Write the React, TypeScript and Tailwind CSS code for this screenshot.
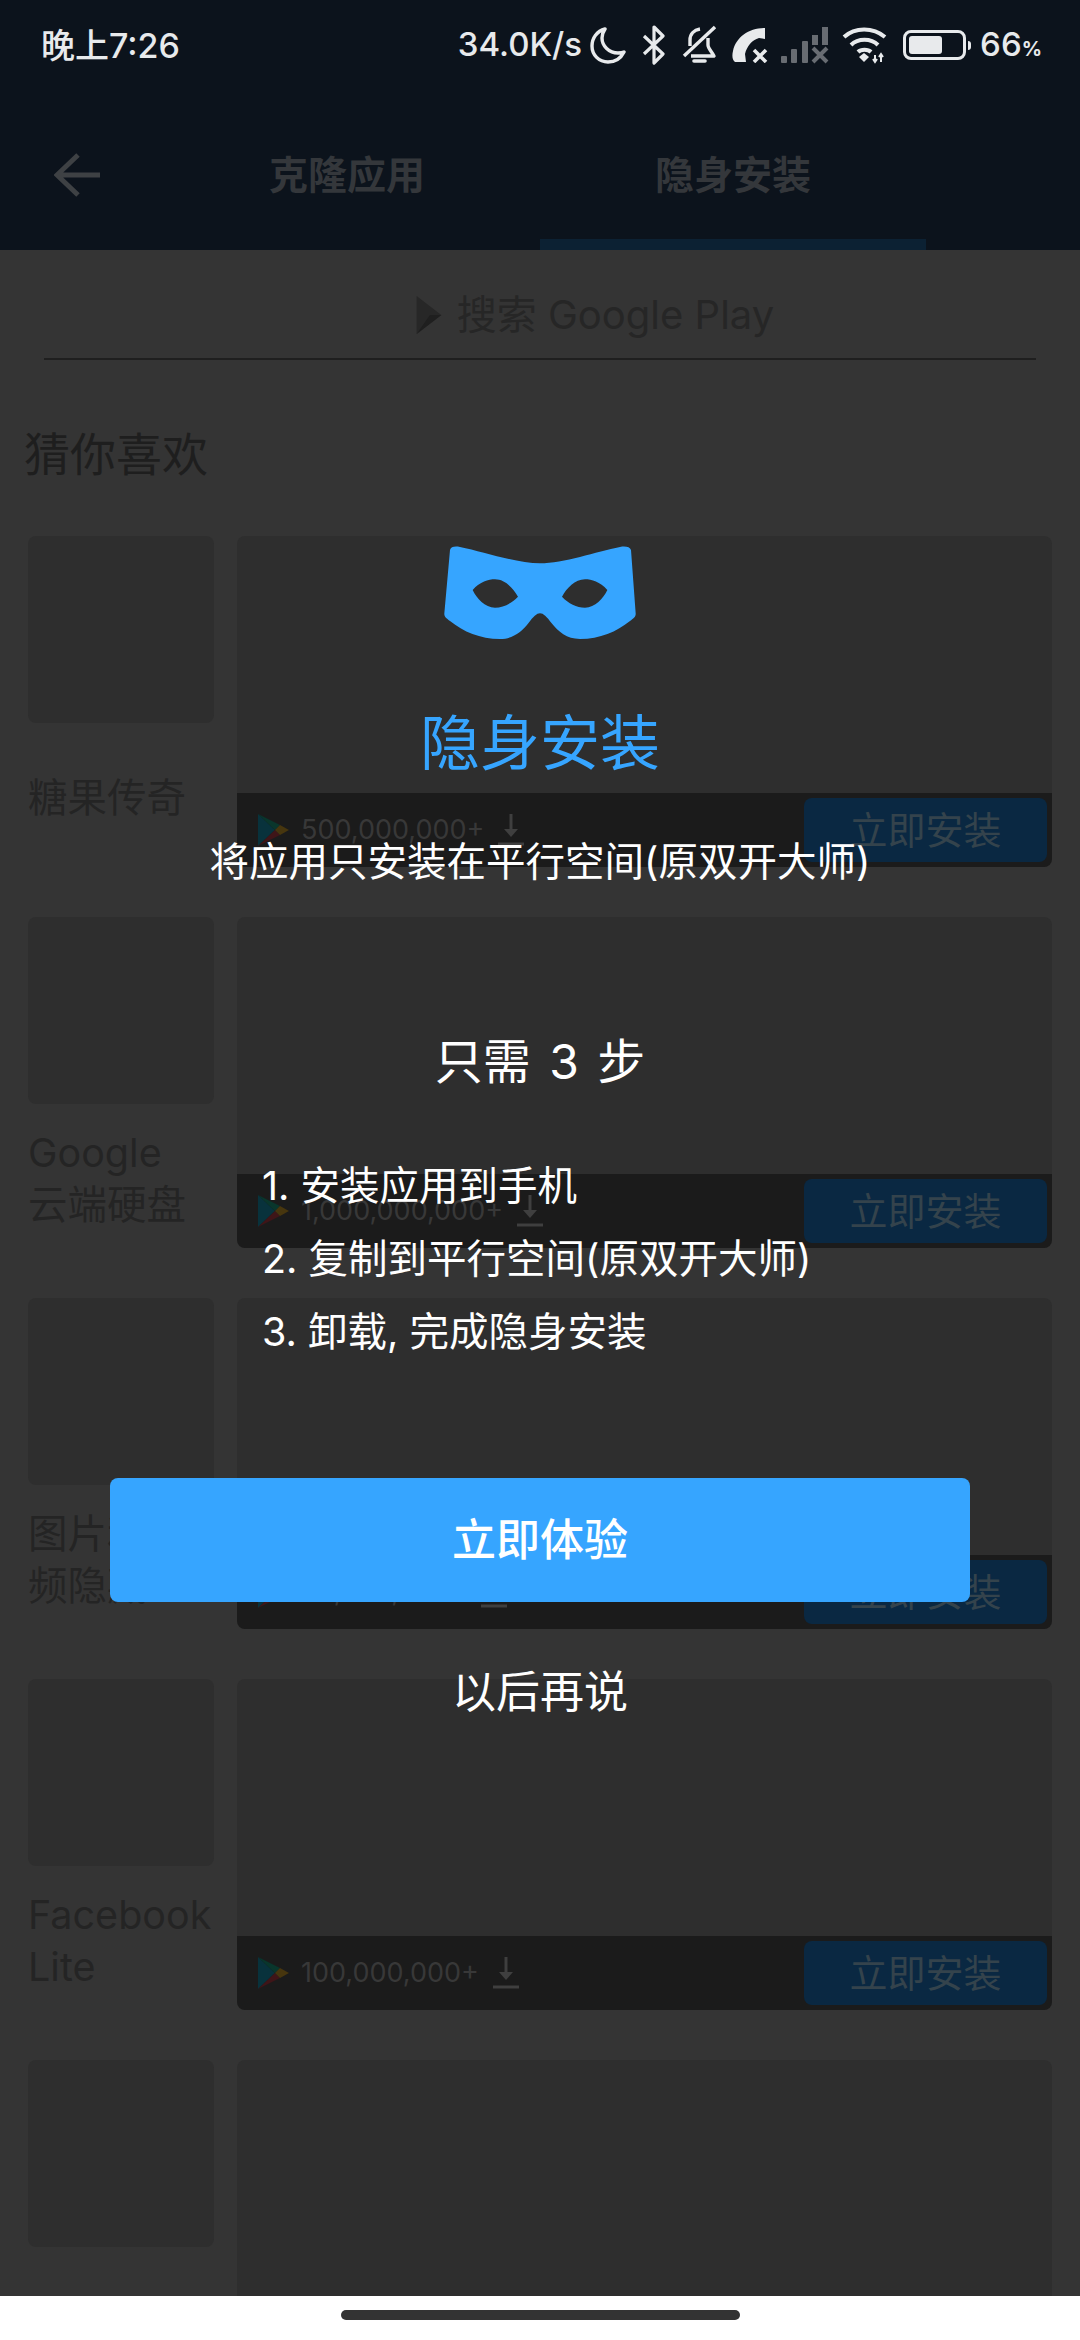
const fontStack = 'Inter, "Noto Sans CJK SC", sans-serif';

const apps = [
  { name: "糖果传奇", count: "500,000,000+" },
  { name: "Google\n云端硬盘", count: "1,000,000,000+" },
  { name: "图片和视频隐藏", count: "50,000,000+" },
  { name: "Facebook\nLite", count: "100,000,000+" },
  { name: "", count: "" },
];

function StatusIcons() {
  return (
    <div className="flex items-center text-[#e8eaec]">
      <svg width="36" height="38" viewBox="0 0 36 38" fill="none" stroke="currentColor" strokeWidth="3.4" className="ml-[8px]">
        <path d="M15 3C7 5 2 12 2 20c0 9 7 16 16 16 7 0 13-4 16-10-2 1-4 1-6 1-9 0-16-7-16-15 0-3 1-6 3-9z" strokeLinejoin="round" />
      </svg>
      <svg width="24" height="40" viewBox="0 0 24 40" fill="none" stroke="currentColor" strokeWidth="3.2" className="ml-[16px]">
        <path d="M2 11l19 18-9 9V2l9 9L2 29" strokeLinejoin="round" />
      </svg>
      <svg width="36" height="40" viewBox="0 0 36 40" fill="none" stroke="currentColor" strokeWidth="3.4" className="ml-[16px]">
        <path d="M2 31L33 2" />
        <path d="M8 21v-6c0-6 4-10 10-11M26 13v7c0 3 3 6 6 11H9" strokeLinejoin="round" />
        <path d="M12 36h11" strokeWidth="3.6" strokeLinecap="round" />
      </svg>
      <svg width="36" height="36" viewBox="0 0 36 36" className="ml-[14px]">
        <path d="M33 1v11l-6-1c-7 2-12 8-14 16l1 8H3C0 33 0 28 1 24 4 10 17 1 33 1z" fill="currentColor" />
        <path d="M22 23l12 12M34 23L22 35" stroke="currentColor" strokeWidth="3.6" fill="none" />
      </svg>
      <svg width="48" height="38" viewBox="0 0 48 38" fill="#686c72" className="ml-[13px]">
        <rect x="0" y="30" width="6" height="7" rx="1" />
        <rect x="10" y="23" width="6" height="14" rx="1" />
        <rect x="21" y="15" width="6" height="22" rx="1" />
        <rect x="31" y="9" width="6" height="10" />
        <rect x="41" y="1" width="6" height="18" />
        <path d="M32 22l14 14M46 22L32 36" stroke="#686c72" strokeWidth="4" fill="none" />
      </svg>
      <svg width="46" height="38" viewBox="0 0 46 38" fill="none" stroke="currentColor" strokeWidth="4" className="ml-[13px]">
        <path d="M2 11c11-10 29-10 41 0M9 19c7-7 20-7 27 0M16 26c3-3 10-3 13 0" />
        <path d="M17 31l5-4 5 4-5 5z" fill="currentColor" stroke="none" />
        <path d="M33 36v-7M31 33l2 3 2-3M39 36v-8M37 31l2-3 2 3" strokeWidth="2" />
      </svg>
      <div className="ml-[15px] flex items-center">
        <div className="flex h-[30px] w-[63px] items-stretch rounded-[8px] border-[3px] border-[#e8eaec] p-[3px]">
          <div className="w-[33px] rounded-[3px] bg-[#e8eaec]" />
        </div>
        <div className="ml-[2px] h-[9px] w-[3px] rounded-r-sm bg-[#e8eaec]" />
      </div>
    </div>
  );
}

function PlayLogo() {
  return (
    <svg width="31" height="32" viewBox="0 0 31 32">
      <path d="M0 0l17 16L0 32z" fill="#08323c" />
      <path d="M0 0l22 11-5 5z" fill="#09362c" />
      <path d="M0 32l17-16 5 5z" fill="#3f1518" />
      <path d="M22 11l9 5-9 5-5-5z" fill="#47360e" />
    </svg>
  );
}

function AppRow({ name, count }: { name: string; count: string }) {
  return (
    <div className="flex shrink-0 gap-[23px]">
      <div className="w-[186px] shrink-0">
        <div className="h-[187px] rounded-lg bg-[#2e2e2e]" />
        <div className="flex h-[144px] items-center whitespace-pre-line pt-[6px] text-[39.5px] leading-[52px] text-[#242424]">{name}</div>
      </div>
      <div className="flex h-[331px] w-[815px] flex-col overflow-hidden rounded-lg bg-[#2e2e2e]">
        <div className="flex-1" />
        {count && (
          <div className="flex h-[74px] items-center bg-[#1b1b1b] pr-[5px] pl-[21px]">
            <PlayLogo />
            <span className="ml-[12px] text-[27px] text-[#383838]">{count}</span>
            <svg width="26" height="32" viewBox="0 0 26 32" fill="none" stroke="#3f3f3f" className="ml-[14px]">
              <path d="M13 0v18" strokeWidth="3" />
              <path d="M6 15h14l-7 8z" fill="#3f3f3f" stroke="none" />
              <path d="M0 30h26" strokeWidth="3" />
            </svg>
            <div className="ml-auto flex h-[64px] w-[243px] items-center justify-center rounded-lg bg-[#0a2842] text-[38px] text-[#34434c]">
              立即安装
            </div>
          </div>
        )}
      </div>
    </div>
  );
}

export default function App() {
  return (
    <div className="relative flex h-[2340px] w-[1080px] flex-col overflow-hidden bg-white" style={{ fontFamily: fontStack }}>
      {/* Toolbar */}
      <header className="h-[250px] shrink-0 bg-[#0c131c]">
        <div className="flex h-[90px] items-center justify-between pr-[38px] pl-[41px] font-medium text-[#e8eaec]">
          <span className="text-[34px]">晚上7:26</span>
          <div className="flex items-center">
            <span className="text-[33px]">34.0K/s</span>
            <StatusIcons />
            <span className="ml-[9px] text-[33px]">
              66<span className="text-[20px] font-bold">%</span>
            </span>
          </div>
        </div>
        <div className="flex h-[160px]">
          <div className="flex w-[154px] items-center pt-[10px] pl-[54px]">
            <svg width="46" height="44" viewBox="0 0 46 44" fill="none" stroke="#3e4144" strokeWidth="5">
              <path d="M24 2L3 22l21 20M3 22h43" />
            </svg>
          </div>
          <div className="flex w-[386px] items-center justify-center pt-[10px] text-[39px] font-bold text-[#34373b]">克隆应用</div>
          <div className="flex w-[386px] flex-col">
            <div className="flex flex-1 items-center justify-center pt-[21px] text-[39px] font-bold text-[#34373b]">隐身安装</div>
            <div className="h-[11px] bg-[#0c2133]" />
          </div>
        </div>
      </header>

      {/* Page under the dialog */}
      <main className="min-h-0 flex-1 overflow-hidden bg-[#343434]">
        <div className="mx-[44px] flex h-[110px] items-center justify-center border-b-[2px] border-[#1f1f1f] pt-[22px] pl-[110px] text-[40px] text-[#262626]">
          <svg width="26" height="38" viewBox="0 0 26 40" className="mr-[15px]">
            <path d="M0 0l26 20L0 40z" fill="#272727" />
            <path d="M0 40l14-20 12 0z" fill="#1f1f1f" />
          </svg>
          搜索 Google Play
        </div>
        <h2 className="mt-[60px] ml-[24px] text-[46px] leading-[68px] font-normal text-[#1e1e1e]">猜你喜欢</h2>
        <div className="mt-[48px] flex flex-col gap-[50px] pl-[28px]">
          {apps.map((app, i) => (
            <AppRow key={i} name={app.name} count={app.count} />
          ))}
        </div>
      </main>

      {/* Gesture bar */}
      <footer className="flex h-[44px] shrink-0 justify-center bg-white pt-[14px]">
        <div className="h-[10px] w-[399px] rounded-full bg-[#333333]" />
      </footer>

      {/* Dialog */}
      <div className="absolute inset-x-0 top-[535px] flex flex-col items-center text-white">
        <svg width="220" height="115" viewBox="0 0 660 345">
          <path
            fillRule="evenodd"
            fill="#36a5ff"
            d="M60 45C62 35 75 33 90 36C160 50 260 85 330 85C400 85 500 50 570 36C585 33 600 35 603 45L617 235C618 245 610 250 600 258C560 290 510 312 450 312C410 312 385 290 365 265C350 245 340 235 330 235C320 235 310 245 295 265C275 290 250 312 210 312C150 312 100 290 60 258C50 250 42 245 43 235ZM128 165C150 140 175 133 195 133C225 133 250 160 264 185C245 205 220 218 195 218C165 218 140 190 128 165ZM532 165C510 140 485 133 465 133C435 133 410 160 396 185C415 205 440 218 465 218C495 218 520 190 532 165Z"
          />
        </svg>
        <h1 className="mt-[53px] text-[60px] leading-[80px] font-normal text-[#36a5ff]">隐身安装</h1>
        <p className="mt-[51px] text-[39.5px] leading-[56px]">将应用只安装在平行空间(原双开大师)</p>
        <p className="mt-[140px] text-[48px] leading-[64px] whitespace-pre [word-spacing:5px]">只需 3 步</p>
        <ol className="mt-[56px] w-full pl-[262px] text-[39.5px] leading-[73px]">
          <li>1. 安装应用到手机</li>
          <li>2. 复制到平行空间(原双开大师)</li>
          <li>3. 卸载, 完成隐身安装</li>
        </ol>
        <button className="mt-[109px] h-[124px] w-[860px] rounded-lg bg-[#36a5ff] text-[44px] font-medium text-white">立即体验</button>
        <button className="mt-[60px] text-[44px] leading-[60px] text-white">以后再说</button>
      </div>
    </div>
  );
}
